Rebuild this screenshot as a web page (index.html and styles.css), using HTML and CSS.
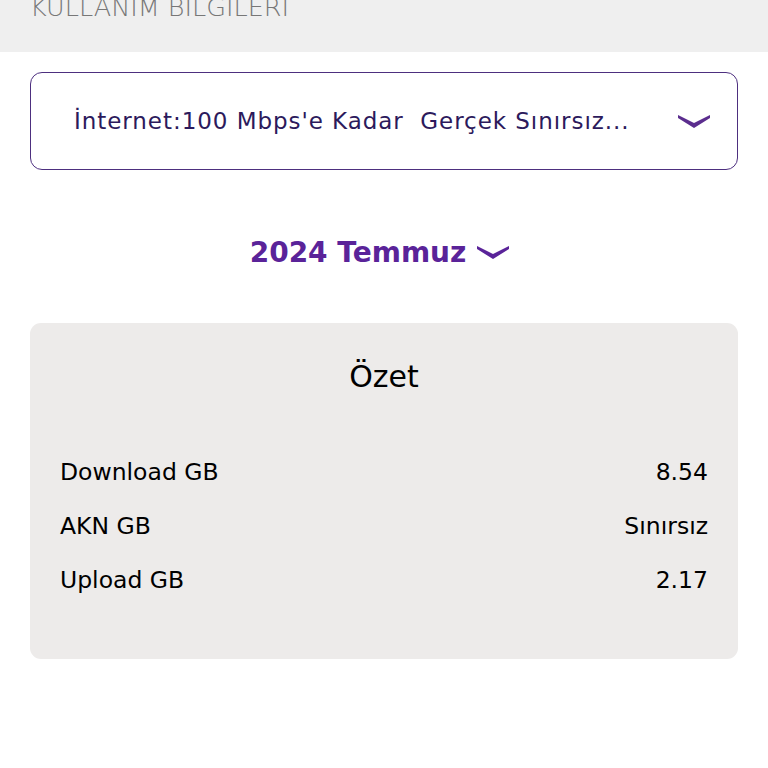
FILE: index.html
```html
<!DOCTYPE html>
<html lang="tr">
<head>
<meta charset="utf-8">
<link rel="stylesheet" href="styles.css">
</head>
<body>
<header class="topbar"><span class="topbar-title">KULLANIM BILGILERI</span></header>
<main class="content">
  <div class="select">
    <span class="select-text">İnternet:100 Mbps'e Kadar&nbsp; Gerçek Sınırsız...</span>
    <svg class="select-chevron" width="34" height="16" viewBox="0 0 34 16"><path d="M1 2 L17 10 L33 2 L33 5 L17 15 L1 5 Z" fill="#5b2d8e"/></svg>
  </div>
  <div class="period">
    <span class="period-text">2024 Temmuz</span>
    <svg class="period-chevron" width="34" height="16" viewBox="0 0 34 16"><path d="M1 2 L17 10 L33 2 L33 5 L17 15 L1 5 Z" fill="#5a2399"/></svg>
  </div>
  <section class="card">
    <h2 class="card-title">Özet</h2>
    <div class="rows">
      <div class="row"><span>Download GB</span><span>8.54</span></div>
      <div class="row"><span>AKN GB</span><span>Sınırsız</span></div>
      <div class="row"><span>Upload GB</span><span>2.17</span></div>
    </div>
  </section>
</main>
</body>
</html>
```
FILE: styles.css
```css
html, body { margin: 0; padding: 0; background: #fff; }
body { font-family: "DejaVu Sans", "Noto Sans", sans-serif; color: #000; }
.topbar { height: 52px; background: #efefef; overflow: hidden; }
.topbar-title { display: block; margin-top: -10px; padding-left: 30px; font-size: 25.5px; font-weight: 200; color: #777; line-height: 34px; white-space: nowrap; }
.content { padding: 20px 30px 0; }
.select { height: 96px; border: 1.6px solid #4d2f7f; border-radius: 12px; display: flex; align-items: center; justify-content: space-between; padding: 0 26px 0 43px; }
.select-text { font-size: 23px; letter-spacing: 0.95px; color: #2c1a5c; }
.period { display: flex; justify-content: center; align-items: center; gap: 10px; margin-top: 66px; padding-right: 8px; }
.period-text { font-size: 28px; font-weight: 700; color: #5a2399; }
.period-chevron { margin-top: -2px; }
.card { margin-top: 54px; background: #edebea; border-radius: 11px; height: 336px; padding: 34px 30px 0; box-sizing: border-box; }
.card-title { margin: 0; text-align: center; font-size: 30px; font-weight: 400; line-height: 40px; }
.rows { margin-top: 56px; display: flex; flex-direction: column; gap: 16px; }
.row { display: flex; justify-content: space-between; font-size: 23.5px; line-height: 38px; }
```
